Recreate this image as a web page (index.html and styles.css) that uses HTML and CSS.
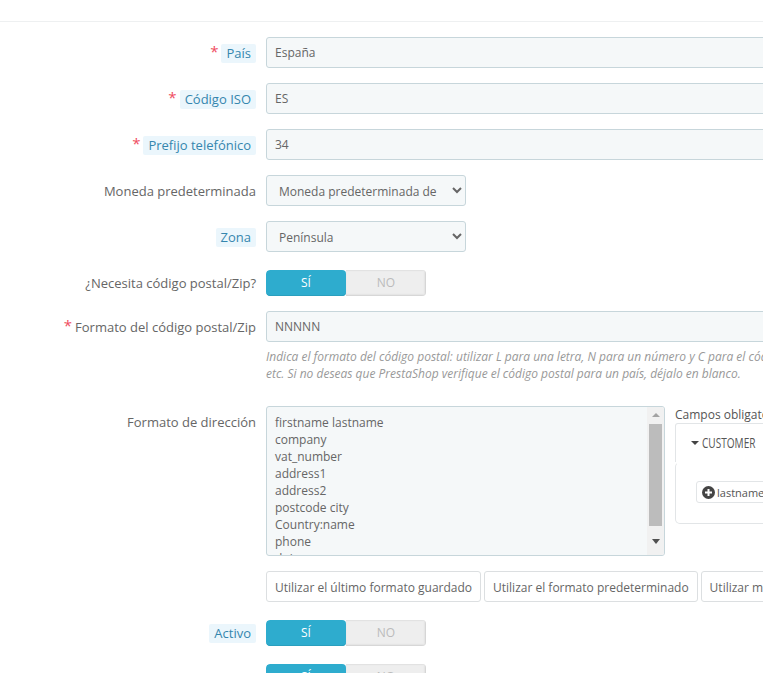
FILE: index.html
```html
<!DOCTYPE html>
<html lang="es">
<head>
<meta charset="utf-8">
<title>País</title>
<link rel="stylesheet" href="styles.css">
</head>
<body>
<div class="topbar"></div>
<form class="form">
  <div class="row">
    <label class="label"><span class="req">*</span><span class="chip">País</span></label>
    <div class="field"><input class="input" value="España"></div>
  </div>
  <div class="row">
    <label class="label"><span class="req">*</span><span class="chip">Código ISO</span></label>
    <div class="field"><input class="input" value="ES"></div>
  </div>
  <div class="row">
    <label class="label"><span class="req">*</span><span class="chip">Prefijo telefónico</span></label>
    <div class="field"><input class="input" value="34"></div>
  </div>
  <div class="row">
    <label class="label">Moneda predeterminada</label>
    <div class="field"><select class="select"><option>Moneda predeterminada de</option></select></div>
  </div>
  <div class="row">
    <label class="label"><span class="chip">Zona</span></label>
    <div class="field"><select class="select"><option>Península</option></select></div>
  </div>
  <div class="row row-toggle">
    <label class="label">¿Necesita código postal/Zip?</label>
    <div class="field"><div class="toggle"><span class="on">SÍ</span><span class="off">NO</span></div></div>
  </div>
  <div class="row row-help">
    <label class="label"><span class="req req-tight">*</span>Formato del código postal/Zip</label>
    <div class="field">
      <input class="input" value="NNNNN">
      <p class="help">Indica el formato del código postal: utilizar L para una letra, N para un número y C para el código del país.<br>etc. Si no deseas que PrestaShop verifique el código postal para un país, déjalo en blanco.</p>
    </div>
  </div>
  <div class="row row-address">
    <label class="label label-top">Formato de dirección</label>
    <div class="field">
      <div class="address">
        <div class="area">
          <textarea class="text" rows="9">firstname lastname
company
vat_number
address1
address2
postcode city
Country:name
phone
dni</textarea>
          <div class="scroll">
            <span class="arrow-up"></span>
            <span class="thumb"></span>
            <span class="arrow-down"></span>
          </div>
        </div>
        <div class="side">
          <div class="side-title">Campos obligatorios</div>
          <div class="panel">
            <div class="tab"><span class="caret"></span><span class="tab-name">CUSTOMER</span></div>
            <div class="tab-body">
              <span class="tag">
                <svg class="plus" viewBox="0 0 13 13" width="13" height="13"><circle cx="6.5" cy="6.5" r="6.5" fill="#444"/><path d="M6.5 3v7M3 6.5h7" stroke="#fff" stroke-width="2"/></svg>lastname
              </span>
            </div>
          </div>
        </div>
      </div>
      <div class="buttons">
        <button type="button" class="btn">Utilizar el último formato guardado</button>
        <button type="button" class="btn">Utilizar el formato predeterminado</button>
        <button type="button" class="btn">Utilizar mi formato actual</button>
      </div>
    </div>
  </div>
  <div class="row row-toggle">
    <label class="label"><span class="chip chip-level">Activo</span></label>
    <div class="field"><div class="toggle"><span class="on">SÍ</span><span class="off">NO</span></div></div>
  </div>
  <div class="row row-toggle">
    <label class="label"></label>
    <div class="field"><div class="toggle"><span class="on">SÍ</span><span class="off">NO</span></div></div>
  </div>
</form>
</body>
</html>
```
FILE: styles.css
```css
html, body {
  margin: 0;
  padding: 0;
  height: 673px;
  overflow: hidden;
  background: #fff;
}
body {
  font-family: "Open Sans", sans-serif;
  font-size: 12px;
  color: #666;
}
.topbar {
  height: 21px;
  border-bottom: 1px solid #eef0f1;
  box-sizing: content-box;
}
.form {
  display: flex;
  flex-direction: column;
  gap: 15px;
  padding-top: 15px;
}
.row {
  display: flex;
  align-items: flex-start;
  width: 1100px;
}
.row-toggle {
  padding-top: 3px;
}
.label {
  width: 256px;
  flex: none;
  display: flex;
  justify-content: flex-end;
  align-items: center;
  min-height: 31px;
  font-size: 13px;
  color: #666;
  white-space: nowrap;
}
.row-toggle .label {
  min-height: 26px;
}
.label-top {
  min-height: 31px;
}
.req {
  color: #ef4d5f;
  font-size: 15px;
  margin-right: 3px;
  line-height: 14px;
  position: relative;
  top: -2px;
}
.req-tight {
  margin-right: 3px;
}
.chip {
  background: #ebf6fc;
  color: #3586ae;
  border-radius: 2px;
  padding: 0 5px;
  line-height: 19px;
  position: relative;
  top: 1px;
}
.chip-level {
  top: 0;
}
.field {
  margin-left: 10px;
  width: 834px;
  flex: none;
}
.input {
  display: block;
  box-sizing: border-box;
  width: 100%;
  height: 31px;
  padding: 0 8px;
  border: 1px solid #c7d6db;
  border-radius: 3px;
  background: #f5f8f9;
  font: 12px "Open Sans", sans-serif;
  color: #666;
}
.select {
  display: block;
  box-sizing: border-box;
  width: 200px;
  height: 31px;
  padding: 1px 8px 0;
  border: 1px solid #c7d6db;
  border-radius: 3px;
  background-color: #f5f8f9;
  font: 12px "Open Sans", sans-serif;
  color: #666;
}
.toggle {
  display: flex;
  width: 160px;
  height: 26px;
  border-radius: 4px;
  overflow: hidden;
  font-size: 12px;
  line-height: 25px;
  text-align: center;
}
.on {
  width: 80px;
  background: #2eacce;
  color: #fff;
  border-radius: 4px;
  box-shadow: inset 0 -1px 0 #2a9fbe;
}
.off {
  width: 80px;
  background: #eee;
  color: #bbb;
  box-shadow: inset -1px -1px 2px #cfcfcf, inset 0 1px 1px #e2e2e2;
}
.help {
  margin: 6px 0 0;
  font-size: 12px;
  font-style: italic;
  line-height: 17px;
  color: #999;
  white-space: nowrap;
  height: 44px;
}
.row-help {
  margin-bottom: -1px;
}
.address {
  display: flex;
  align-items: flex-start;
}
.area {
  display: flex;
  box-sizing: border-box;
  width: 399px;
  height: 150px;
  border: 1px solid #c7d6db;
  border-radius: 3px;
  background: #f5f8f9;
  overflow: hidden;
}
.text {
  flex: 1;
  min-width: 0;
  height: 148px;
  box-sizing: border-box;
  margin: 0;
  padding: 7px 8px;
  border: 0;
  outline: 0;
  resize: none;
  overflow: hidden;
  background: transparent;
  font: 12px/17px "Open Sans", sans-serif;
  color: #666;
}
.scroll {
  flex: none;
  width: 17px;
  height: 148px;
  display: flex;
  flex-direction: column;
  align-items: center;
  background: #f1f1f1;
}
.arrow-up {
  margin-top: 6px;
  border: 4px solid transparent;
  border-top: 0;
  border-bottom: 4px solid #a3a3a3;
}
.thumb {
  margin-top: 7px;
  width: 13px;
  height: 102px;
  background: #bcbcbc;
}
.arrow-down {
  margin-top: 13px;
  border: 4px solid transparent;
  border-bottom: 0;
  border-top: 5px solid #505050;
}
.side {
  margin-left: 10px;
  width: 400px;
  flex: none;
}
.side-title {
  height: 17px;
  line-height: 17px;
  color: #555;
}
.panel {
  box-sizing: border-box;
  height: 101px;
}
.tab {
  box-sizing: border-box;
  height: 39px;
  padding-left: 15px;
  padding-bottom: 1px;
  display: flex;
  align-items: center;
  border: 1px solid #e2e5e7;
  border-bottom: 0;
  border-radius: 3px 3px 0 0;
  color: #555;
}
.tab-name {
  display: inline-block;
  font-size: 14px;
  transform: scaleX(0.72);
  transform-origin: left center;
  margin-left: 1px;
}
.caret {
  margin-right: 2px;
  border: 4px solid transparent;
  border-bottom: 0;
  border-top: 4px solid #444;
}
.tab-body {
  box-sizing: border-box;
  height: 62px;
  padding: 18px 20px 0;
  border: 1px solid #e2e5e7;
  border-top-color: transparent;
  border-radius: 5px;
}
.tag {
  display: inline-flex;
  align-items: center;
  gap: 2px;
  height: 20px;
  padding: 0 5px;
  border: 1px solid #e2e5e7;
  border-radius: 3px;
  font-size: 11px;
  color: #555;
}
.buttons {
  display: flex;
  gap: 3px;
  margin-top: 15px;
}
.btn {
  height: 31px;
  padding: 1px 8px 0;
  border: 1px solid #dcdfe1;
  border-radius: 3px;
  background: #fff;
  font: 12px "Open Sans", sans-serif;
  color: #666;
  white-space: nowrap;
}
```
